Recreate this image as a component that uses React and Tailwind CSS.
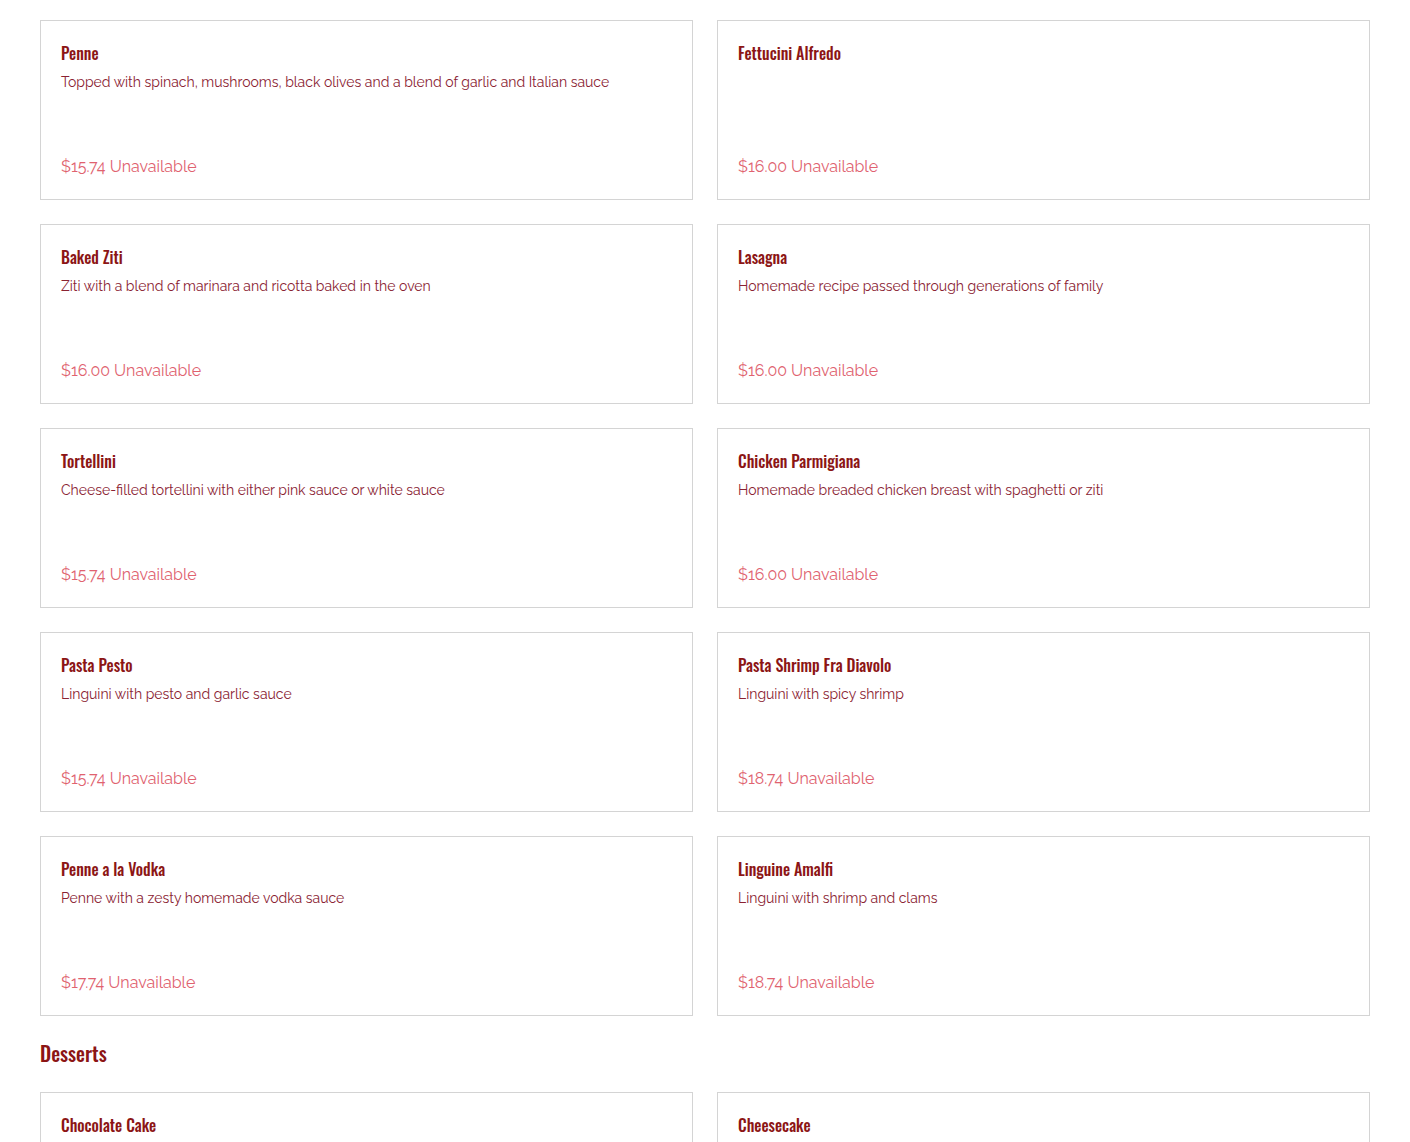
const pasta = [
  { name: "Penne", desc: "Topped with spinach, mushrooms, black olives and a blend of garlic and Italian sauce", price: "$15.74" },
  { name: "Fettucini Alfredo", desc: "", price: "$16.00" },
  { name: "Baked Ziti", desc: "Ziti with a blend of marinara and ricotta baked in the oven", price: "$16.00" },
  { name: "Lasagna", desc: "Homemade recipe passed through generations of family", price: "$16.00" },
  { name: "Tortellini", desc: "Cheese-filled tortellini with either pink sauce or white sauce", price: "$15.74" },
  { name: "Chicken Parmigiana", desc: "Homemade breaded chicken breast with spaghetti or ziti", price: "$16.00" },
  { name: "Pasta Pesto", desc: "Linguini with pesto and garlic sauce", price: "$15.74" },
  { name: "Pasta Shrimp Fra Diavolo", desc: "Linguini with spicy shrimp", price: "$18.74" },
  { name: "Penne a la Vodka", desc: "Penne with a zesty homemade vodka sauce", price: "$17.74" },
  { name: "Linguine Amalfi", desc: "Linguini with shrimp and clams", price: "$18.74" },
];

const desserts = [
  { name: "Chocolate Cake", desc: "", price: "" },
  { name: "Cheesecake", desc: "", price: "" },
];

const heading = "font-['Oswald','Liberation_Sans_Narrow','DejaVu_Sans_Condensed',sans-serif]";

const MenuCard = ({ item }) => (
  <div className="h-[180px] border border-[#d4d4d4] bg-white px-5 pt-[19px] pb-[22px] flex flex-col">
    <h3 className={`${heading} text-[16px] leading-[26px] font-medium text-[#8c1515]`}>
      {item.name}
    </h3>
    <p className="mt-[6px] text-[14px] leading-[20px] text-[#8a2232] min-h-[20px]">
      {item.desc}
    </p>
    <div className="mt-auto text-[16px] leading-[20px] text-[#e0626f]">
      {item.price} Unavailable
    </div>
  </div>
);

export default function App() {
  return (
    <div className="min-h-screen bg-white px-10 pt-5 font-['Raleway','Lato',sans-serif]">
      <div className="grid grid-cols-2 gap-6">
        {pasta.map((item) => (
          <MenuCard key={item.name} item={item} />
        ))}
      </div>
      <h2 className={`${heading} mt-[23px] text-[20px] leading-[28px] font-medium text-[#8c1515]`}>
        Desserts
      </h2>
      <div className="grid grid-cols-2 gap-6 mt-[25px]">
        {desserts.map((item) => (
          <MenuCard key={item.name} item={item} />
        ))}
      </div>
    </div>
  );
}
